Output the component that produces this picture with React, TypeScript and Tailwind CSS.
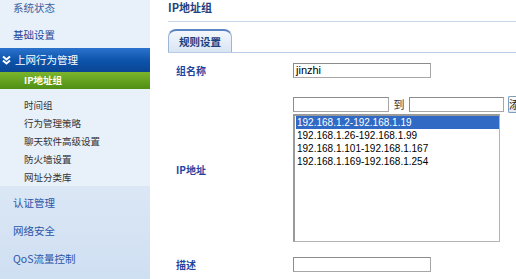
import React from 'react';

const cjk = '"Noto Sans CJK SC", "Liberation Sans", sans-serif';
const latin = '"Liberation Sans", "Noto Sans CJK SC", sans-serif';

const subItems = ['时间组', '行为管理策略', '聊天软件高级设置', '防火墙设置', '网址分类库'];
const ranges = [
  '192.168.1.2-192.168.1.19',
  '192.168.1.26-192.168.1.99',
  '192.168.1.101-192.168.1.167',
  '192.168.1.169-192.168.1.254',
];

const ChevronsDown = () => (
  <svg width="9" height="10" viewBox="0 0 9 10" className="shrink-0">
    <path d="M1 1.5 L4.5 4.5 L8 1.5" stroke="white" strokeWidth="2" fill="none" />
    <path d="M1 5.5 L4.5 8.5 L8 5.5" stroke="white" strokeWidth="2" fill="none" />
  </svg>
);

const Sidebar = () => (
  <div className="w-[150px] shrink-0 flex flex-col" style={{ fontFamily: cjk }}>
    <div className="bg-[#e8f0f9] text-[10.5px]">
      <div className="h-[20px] pl-[13px] pt-[1px] leading-[13px] text-[#3a5f9e]">系统状态</div>
      <div className="h-[28px] pl-[13px] flex items-center pt-[2px] text-[#23489a]">基础设置</div>
    </div>
    <div className="h-[24px] flex items-center gap-[4px] pl-[2px] text-white text-[10.5px] bg-gradient-to-b from-[#2a73cc] via-[#0d55ad] to-[#0a4593]">
      <ChevronsDown />
      <span>上网行为管理</span>
    </div>
    <div className="h-[17px] flex items-center pl-[24px] text-white text-[9.5px] font-bold bg-gradient-to-b from-[#7bb52b] to-[#4f8f14]">
      IP地址组
    </div>
    <div className="bg-[#e8f0f9] pt-[7px] text-[9.5px]">
      {subItems.map((s) => (
        <div key={s} className="h-[18px] flex items-center pl-[24px] text-[#333333]">
          {s}
        </div>
      ))}
    </div>
    <div className="flex-1 bg-gradient-to-b from-[#dbe7f5] to-[#cfdff2] pt-[3px] text-[10.5px] text-[#2b55a8]">
      {['认证管理', '网络安全', 'QoS流量控制'].map((s) => (
        <div key={s} className="h-[28px] flex items-center pl-[13px]">
          {s}
        </div>
      ))}
    </div>
  </div>
);

const TextBox = ({ value, w }: { value?: string; w: string }) => (
  <div
    className={`${w} h-[15px] bg-white border border-[#a7a7a7] border-t-[#8c8c8c] border-l-[#8c8c8c] text-[11px] leading-[13px] pl-[2px] font-normal text-black`}
    style={{ fontFamily: latin }}
  >
    {value}
  </div>
);

const App = () => {
  return (
    <div className="w-[516px] h-[279px] flex bg-white overflow-hidden">
      <Sidebar />
      <div className="flex-1 pl-[18px] flex flex-col" style={{ fontFamily: cjk }}>
        <div className="h-[21px] pt-[1px] text-[11px] font-bold text-[#1f3f7e] leading-[13px]">
          IP地址组
        </div>
        <div className="h-[1px] bg-[#c9d7ea]" />
        <div className="h-[7px]" />
        <div className="flex items-end border-b border-[#b9cce6] h-[24px]">
          <div className="w-[64px] h-[23px] rounded-t-[8px] border border-b-0 border-[#9cb5d8] border-t-2 border-t-[#5b84c4] bg-gradient-to-b from-[#f3f7fc] to-[#d9e5f4] flex items-center justify-center text-[10.5px] font-bold text-[#1f3f7e]">
            规则设置
          </div>
        </div>
        <div className="flex flex-col pl-[8px] text-[10px] font-bold text-[#1f44a0]">
          <div className="flex items-center mt-[9px] h-[16px]">
            <div className="w-[117px]">组名称</div>
            <TextBox value="jinzhi" w="w-[138px]" />
          </div>
          <div className="flex items-center mt-[18px]">
            <div className="w-[117px]">IP地址</div>
            <div className="flex flex-col">
              <div className="flex items-center h-[17px]">
                <TextBox w="w-[96px]" />
                <span className="w-[20px] text-center font-normal text-[#333] text-[11px]">到</span>
                <TextBox w="w-[95px]" />
                <div className="ml-[4px] w-[8px] h-[17px] border border-[#7f9db9] rounded-l-[2px] border-r-0 bg-gradient-to-b from-white to-[#e3e9f1] text-[11px] font-normal text-[#222] leading-[15px] overflow-hidden">
                  <span className="block w-[30px]">添加</span>
                </div>
              </div>
              <div
                className="mt-[1px] w-[207px] h-[128px] bg-white border border-[#b4b4b4] border-l-2 border-t-2 border-l-[#9a9a9a] border-t-[#9a9a9a] pl-[1px] font-normal text-black"
                style={{ fontFamily: latin }}
              >
                {ranges.map((r, i) => (
                  <div
                    key={r}
                    className={`h-[13px] leading-[13px] text-[10px] pl-[1px] ${i === 0 ? 'bg-[#316ac5] text-white' : ''}`}
                  >
                    {r}
                  </div>
                ))}
              </div>
            </div>
          </div>
          <div className="flex items-center mt-[15px]">
            <div className="w-[117px]">描述</div>
            <TextBox w="w-[138px]" />
          </div>
        </div>
      </div>
    </div>
  );
};

export default App;
